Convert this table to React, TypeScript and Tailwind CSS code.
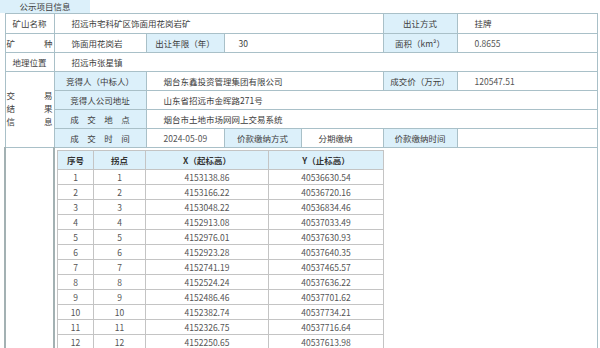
import React from 'react';

const FONT = { fontFamily: '"Noto Sans CJK SC", "Liberation Sans", sans-serif' };

const POINTS: [string, string][] = [
  ['4153138.86', '40536630.54'],
  ['4153166.22', '40536720.16'],
  ['4153048.22', '40536834.46'],
  ['4152913.08', '40537033.49'],
  ['4152976.01', '40537630.93'],
  ['4152923.28', '40537640.35'],
  ['4152741.19', '40537465.57'],
  ['4152524.24', '40537636.22'],
  ['4152486.46', '40537701.62'],
  ['4152382.74', '40537734.21'],
  ['4152326.75', '40537716.64'],
  ['4152250.65', '40537613.98'],
];

const cell = 'border border-[#a9c0c8] p-0 align-middle whitespace-nowrap overflow-hidden';
const label = `${cell} bg-[#dcf0fa] text-center`;
const value = `${cell} pl-[17px] text-left`;
const first = `${cell} text-center`;

function Spread({ chars }: { chars: string[] }) {
  return (
    <div className="flex justify-between px-[1px]">
      {chars.map((c) => (
        <span key={c}>{c}</span>
      ))}
    </div>
  );
}

function PointsTable() {
  const td = 'border border-[#c4c4c4] p-0 text-center align-middle h-[15px] text-[#555]';
  const th = 'border border-[#c4c4c4] p-0 text-center align-middle bg-[#dcf0fa] font-bold text-[#333] h-[19px]';
  return (
    <table className="border-collapse table-fixed w-[326px]">
      <colgroup>
        <col className="w-[36px]" />
        <col className="w-[52px]" />
        <col className="w-[123px]" />
        <col className="w-[115px]" />
      </colgroup>
      <thead>
        <tr>
          <th className={th}>序号</th>
          <th className={th}>拐点</th>
          <th className={th}>X（起标高）</th>
          <th className={th}>Y（止标高）</th>
        </tr>
      </thead>
      <tbody>
        {POINTS.map(([x, y], i) => (
          <tr key={i}>
            <td className={td}>{i + 1}</td>
            <td className={td}>{i + 1}</td>
            <td className={td}>{x}</td>
            <td className={td}>{y}</td>
          </tr>
        ))}
      </tbody>
    </table>
  );
}

export default function App() {
  return (
    <div className="w-[600px] h-[348px] overflow-hidden bg-white text-[8.5px] leading-[11px] text-[#3c3c3c]" style={FONT}>
      <div className="w-[90px] h-[13px] bg-[#dcf0fa] text-center leading-[13px]">公示项目信息</div>

      <table className="ml-[4px] w-[592px] border-collapse table-fixed">
        <colgroup>
          <col className="w-[49px]" />
          <col className="w-[92px]" />
          <col className="w-[78px]" />
          <col className="w-[77px]" />
          <col className="w-[82px]" />
          <col className="w-[74px]" />
          <col className="w-[140px]" />
        </colgroup>
        <tbody>
          <tr className="h-[20px]">
            <td className={first}>矿山名称</td>
            <td className={value} colSpan={4}>招远市宅科矿区饰面用花岗岩矿</td>
            <td className={label}>出让方式</td>
            <td className={value}>挂牌</td>
          </tr>
          <tr className="h-[19px]">
            <td className={cell}>
              <Spread chars={['矿', '种']} />
            </td>
            <td className={value}>饰面用花岗岩</td>
            <td className={label}>出让年限（年）</td>
            <td className={`${cell} pl-[14px]`} colSpan={2}>30</td>
            <td className={label}>面积（km²）</td>
            <td className={`${value} text-[#555]`}>0.8655</td>
          </tr>
          <tr className="h-[19px]">
            <td className={first}>地理位置</td>
            <td className={value} colSpan={6}>招远市张星镇</td>
          </tr>
          <tr className="h-[19px]">
            <td className={cell} rowSpan={4}>
              <div className="flex flex-col gap-[2px] pb-[3px]">
                <Spread chars={['交', '易']} />
                <Spread chars={['结', '果']} />
                <Spread chars={['信', '息']} />
              </div>
            </td>
            <td className={label}>竞得人（中标人）</td>
            <td className={value} colSpan={3}>烟台东鑫投资管理集团有限公司</td>
            <td className={label}>成交价（万元）</td>
            <td className={`${value} text-[#555]`}>120547.51</td>
          </tr>
          <tr className="h-[19px]">
            <td className={label}>竞得人公司地址</td>
            <td className={value} colSpan={5}>山东省招远市金晖路271号</td>
          </tr>
          <tr className="h-[19px]">
            <td className={label}>成　交　地　点</td>
            <td className={value} colSpan={5}>烟台市土地市场网网上交易系统</td>
          </tr>
          <tr className="h-[19px]">
            <td className={label}>成　交　时　间</td>
            <td className={`${value} text-[#555]`}>2024-05-09</td>
            <td className={label}>价款缴纳方式</td>
            <td className={value}>分期缴纳</td>
            <td className={label}>价款缴纳时间</td>
            <td className={cell}></td>
          </tr>
          <tr>
            <td className="border border-[#a9c0c8] border-l-2 border-l-[#a3b1b3] p-0"></td>
            <td className="border border-[#a9c0c8] border-l-2 border-l-[#a3b1b3] align-top pt-[2px] pl-[2px] pb-[20px]" colSpan={6}>
              <PointsTable />
            </td>
          </tr>
        </tbody>
      </table>
    </div>
  );
}
